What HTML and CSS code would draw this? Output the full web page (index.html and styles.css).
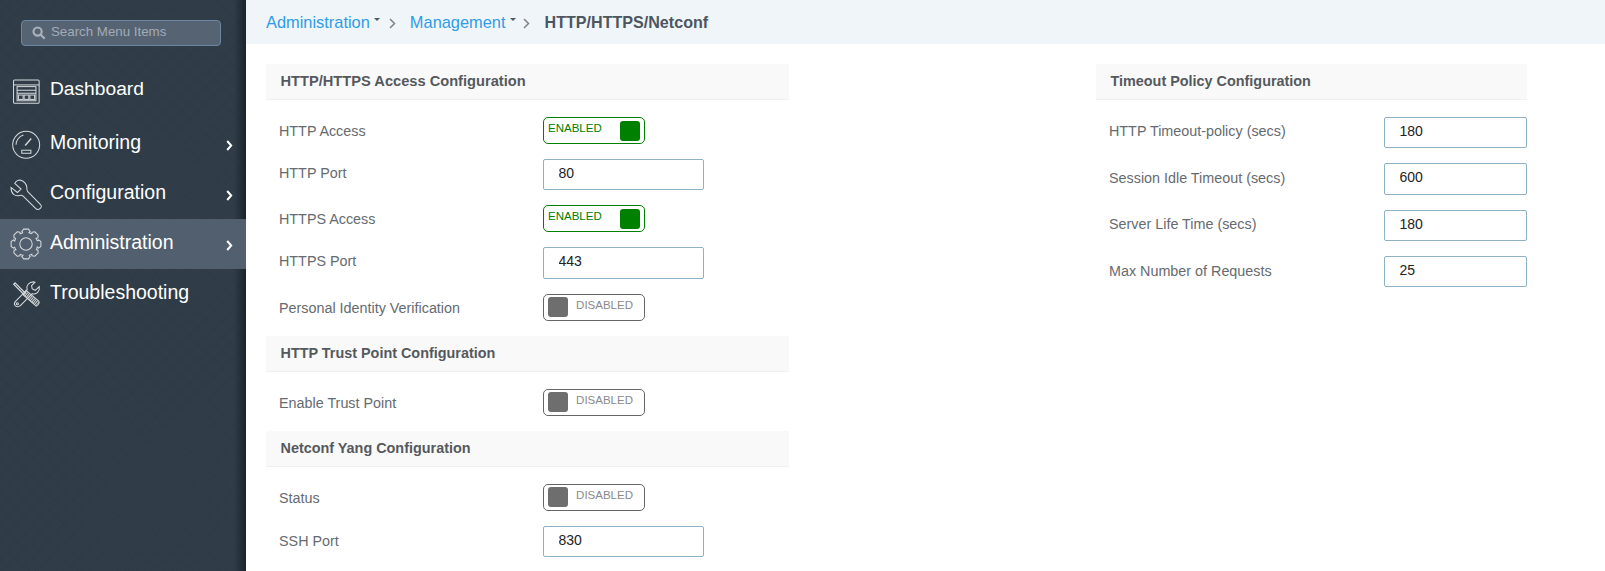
FILE: index.html
```html
<!DOCTYPE html>
<html lang="en">
<head>
<meta charset="utf-8">
<title>HTTP/HTTPS/Netconf</title>
<link rel="stylesheet" href="styles.css">
</head>
<body>
<div class="app">
  <aside class="sidebar">
    <div class="search">
      <svg class="search-icon" viewBox="0 0 13 13"><circle cx="5.2" cy="5.2" r="3.8"/><path d="M8 8l3.8 3.8"/></svg>
      <span>Search Menu Items</span>
    </div>
    <nav class="menu">
      <a class="menu-item menu-first">
        <svg class="menu-icon" viewBox="15 17.5 95 95"><rect x="25.5" y="29.5" width="76" height="69" rx="3"/><path d="M25 44h77"/><rect x="36" y="49" width="56" height="42"/><path d="M36 60h56M36 69h56"/><rect x="40" y="74" width="14" height="13"/><rect x="57" y="74" width="14" height="13"/><rect x="74" y="74" width="14" height="13"/></svg>
        <span class="menu-label">Dashboard</span>
      </a>
      <a class="menu-item">
        <svg class="menu-icon" viewBox="15 172 95 95"><circle cx="63" cy="222" r="40"/><path d="M33 222a30 30 0 0 1 22-29"/><path d="M60 224l18-21" stroke-width="4"/><rect x="50" y="238" width="27" height="9"/></svg>
        <span class="menu-label">Monitoring</span>
        <svg class="chevron" viewBox="0 0 7 11"><path d="M1.2 1l4 4.5-4 4.5"/></svg>
      </a>
      <a class="menu-item">
        <svg class="menu-icon" viewBox="15 22 95 95"><path d="M45 28C55 30 66 40 65 52c0 5 0 8 2 10l38 38c5 5 3 10-1 13-4 3-9 3-13-1L54 76c-3-3-7-3-11-2-13 3-25-4-25-24l19 15 11-10-19-17c4-7 10-10 16-10z"/></svg>
        <span class="menu-label">Configuration</span>
        <svg class="chevron" viewBox="0 0 7 11"><path d="M1.2 1l4 4.5-4 4.5"/></svg>
      </a>
      <a class="menu-item menu-active">
        <svg class="menu-icon gear" viewBox="-15.5 -15.5 31 31">
          <defs><path id="tooth" d="M10.9-2.92L12.2-4 14.4-2.3V2.3L12.2 4 10.9 2.92A11.3 11.3 0 0 1 9.79 5.65"/></defs>
          <use href="#tooth"/><use href="#tooth" transform="rotate(45)"/><use href="#tooth" transform="rotate(90)"/><use href="#tooth" transform="rotate(135)"/><use href="#tooth" transform="rotate(180)"/><use href="#tooth" transform="rotate(225)"/><use href="#tooth" transform="rotate(270)"/><use href="#tooth" transform="rotate(315)"/>
          <circle r="6"/>
        </svg>
        <span class="menu-label">Administration</span>
        <svg class="chevron" viewBox="0 0 7 11"><path d="M1.2 1l4 4.5-4 4.5"/></svg>
      </a>
      <a class="menu-item">
        <svg class="menu-icon" viewBox="15 325.5 95 95"><path class="masked" d="M84 337c-12 0-22 11-18 23L32 394c-9 9 0 21 11 15 2-1 3-2 5-4l33-33c13 4 23-7 21-21L90 362l-9-4-2-10 10-10z"/><circle cx="37" cy="402" r="3"/><path d="M26 344l4-4 30 30-4 4z" stroke-width="3.5"/><path class="stripes" d="M58 370l38 33"/><path d="M63 362l38 33c2 3 0 9-8 14l-40-35z"/></svg>
        <span class="menu-label">Troubleshooting</span>
      </a>
    </nav>
  </aside>
  <main class="main">
    <header class="crumbs">
      <a class="crumb-link">Administration<i class="caret"></i></a>
      <svg class="crumb-sep" viewBox="0 0 7 11"><path d="M1 1l4.5 4.5L1 10"/></svg>
      <a class="crumb-link">Management<i class="caret"></i></a>
      <svg class="crumb-sep crumb-sep-last" viewBox="0 0 7 11"><path d="M1 1l4.5 4.5L1 10"/></svg>
      <strong class="crumb-current">HTTP/HTTPS/Netconf</strong>
    </header>
    <div class="columns">
      <section class="col col-left">
        <h2 class="section-title section-first section-wide">HTTP/HTTPS Access Configuration</h2>
        <div class="row"><label>HTTP Access</label><div class="toggle on"><span>ENABLED</span><i></i></div></div>
        <div class="row row-high"><label>HTTP Port</label><input class="field" value="80"></div>
        <div class="row"><label>HTTPS Access</label><div class="toggle on"><span>ENABLED</span><i></i></div></div>
        <div class="row row-high"><label>HTTPS Port</label><input class="field" value="443"></div>
        <div class="row row-low"><label>Personal Identity Verification</label><div class="toggle off"><i></i><span>DISABLED</span></div></div>
        <h2 class="section-title">HTTP Trust Point Configuration</h2>
        <div class="row row-low"><label>Enable Trust Point</label><div class="toggle off"><i></i><span>DISABLED</span></div></div>
        <h2 class="section-title">Netconf Yang Configuration</h2>
        <div class="row row-low"><label>Status</label><div class="toggle off"><i></i><span>DISABLED</span></div></div>
        <div class="row"><label>SSH Port</label><input class="field" value="830"></div>
      </section>
      <section class="col col-right">
        <h2 class="section-title section-first">Timeout Policy Configuration</h2>
        <div class="row row-high"><label>HTTP Timeout-policy (secs)</label><input class="field" value="180"></div>
        <div class="row row-mid"><label>Session Idle Timeout (secs)</label><input class="field" value="600"></div>
        <div class="row row-mid"><label>Server Life Time (secs)</label><input class="field" value="180"></div>
        <div class="row row-mid"><label>Max Number of Requests</label><input class="field" value="25"></div>
      </section>
    </div>
  </main>
</div>
</body>
</html>
```
FILE: styles.css
```css
* { box-sizing: border-box; }
html, body { margin: 0; height: 100%; overflow: hidden; background: #fff; }
body { font-family: "Liberation Sans", Arial, sans-serif; }
.app { display: flex; height: 571px; }

/* Sidebar */
.sidebar {
  width: 246px; flex: none; padding-top: 20px;
  background:
    linear-gradient(90deg, rgba(20,27,34,0) 234px, rgba(20,27,34,.75) 246px),
    repeating-linear-gradient(45deg, rgba(255,255,255,.008) 0 1px, rgba(0,0,0,.008) 1px 2px),
    repeating-linear-gradient(-45deg, rgba(255,255,255,.008) 0 1px, rgba(0,0,0,.008) 1px 2px),
    #2e3b47;
}
.search {
  display: flex; align-items: center; margin: 0 25px 21px 21px; height: 26px; padding: 0 0 3px 10px;
  background: #566373; border: 1px solid #6c87a3; border-radius: 4px;
  color: #a3abb6; font-size: 13.3px;
}
.search-icon { width: 14px; height: 14px; margin-right: 5px; margin-top: 2px; fill: none; stroke: #a9b1ba; stroke-width: 2; }
.menu { display: flex; flex-direction: column; }
.menu-item { position: relative; display: flex; align-items: center; height: 50px; padding-left: 10px; color: #fff; }
.menu-first { margin-bottom: 2px; }
.menu-active { background: #525f6f; }
.menu-icon { width: 32px; height: 32px; flex: none; fill: none; stroke: #d6dadd; stroke-width: 3; }
.gear { stroke-width: 1; }
.masked { fill: #2e3b47; }
.stripes { stroke-width: 15; stroke-dasharray: 3 2.4; }
.menu-label { margin-left: 8px; margin-top: -4px; font-size: 19.5px; }
.menu-first .menu-label { margin-top: -6px; font-size: 19.2px; }
.chevron { position: absolute; left: 226px; top: 21px; width: 7px; height: 11px; fill: none; stroke: #fff; stroke-width: 2; }

/* Main */
.main { flex: 1; min-width: 0; }
.crumbs {
  display: flex; align-items: center; height: 44px; padding: 1px 0 0 20px;
  background: #f0f5fa; font-size: 16.4px;
}
.crumb-link { display: flex; align-items: center; color: #2f9ce6; }
.caret { width: 0; height: 0; margin: -6px 0 0 4px; border: 3.5px solid transparent; border-top-color: #4b5a66; border-bottom: 0; }
.crumb-sep { width: 7px; height: 11px; margin: 2px 14px 0 9px; fill: none; stroke: #7d8489; stroke-width: 1.5; }
.crumb-sep-last { margin-left: 7px; margin-right: 15px; }
.crumb-current { color: #4d5560; font-size: 16.1px; }

.columns { display: flex; padding: 20px 0 0 20px; }
.col-left { width: 523px; }
.col-right { width: 431px; margin-left: 307px; }
.col-right .row label { width: 275px; }
.col-right .field { width: 143px; }

.section-title {
  height: 36px; margin: 0 0 17px; padding: 0 0 1px 14.5px;
  display: flex; align-items: center;
  background: #f9f9f9; border-bottom: 1px solid #f1f1f1;
  color: #55595e; font-size: 14.4px; font-weight: 700;
}
.section-first { padding-bottom: 2px; }
.section-wide { font-size: 14.65px; }
.row { display: flex; align-items: center; margin-bottom: 15px; padding-left: 13px; }
.row label { width: 264px; flex: none; color: #666b70; font-size: 14.35px; }
.row-high label { margin-bottom: 4px; }
.row-mid label { margin-bottom: 2px; }
.row-low label { margin-top: 2px; }
.field {
  width: 161px; height: 31.33px; padding: 0 0 3px 14.5px;
  border: 1px solid #8fb1c6; border-radius: 2px; background: #fff;
  color: #222; font: 14px "Liberation Sans", Arial, sans-serif; outline: 0;
}
.toggle {
  display: flex; align-items: center; justify-content: space-between;
  width: 102px; height: 27px; padding: 0 4px; border: 1px solid; border-radius: 5px;
  font-size: 11.5px;
}
.toggle i { width: 20px; height: 20px; border-radius: 3px; }
.toggle span { margin-top: -4px; }
.toggle.on { border-color: #008000; color: #008000; }
.toggle.on i { background: #008000; }
.toggle.on span { margin-top: -5px; }
.toggle.off { border-color: #666; color: #8a8a8a; }
.toggle.off i { background: #6e6e6e; }
.toggle.off span { margin-right: 7px; }
```
